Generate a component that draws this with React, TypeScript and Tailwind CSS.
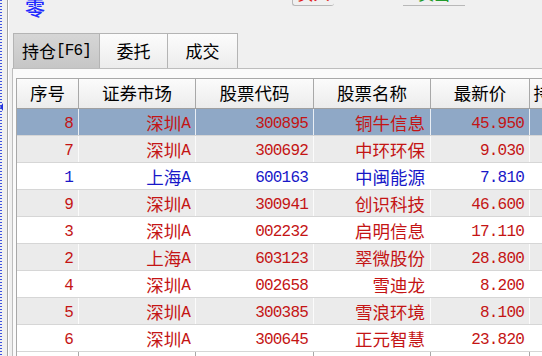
const cjk = "font-['Noto_Sans_CJK_SC',sans-serif]";
const mono = "font-['Liberation_Mono',monospace] text-[16px] tracking-[-0.8px]";

type Row = { no: string; mkt: string; code: string; name: string; price: string; color: "red" | "blue" };

const rows: Row[] = [
  { no: "8", mkt: "深圳", code: "300895", name: "铜牛信息", price: "45.950", color: "red" },
  { no: "7", mkt: "深圳", code: "300692", name: "中环环保", price: "9.030", color: "red" },
  { no: "1", mkt: "上海", code: "600163", name: "中闽能源", price: "7.810", color: "blue" },
  { no: "9", mkt: "深圳", code: "300941", name: "创识科技", price: "46.600", color: "red" },
  { no: "3", mkt: "深圳", code: "002232", name: "启明信息", price: "17.110", color: "red" },
  { no: "2", mkt: "上海", code: "603123", name: "翠微股份", price: "28.800", color: "red" },
  { no: "4", mkt: "深圳", code: "002658", name: "雪迪龙", price: "8.200", color: "red" },
  { no: "5", mkt: "深圳", code: "300385", name: "雪浪环境", price: "8.100", color: "red" },
  { no: "6", mkt: "深圳", code: "300645", name: "正元智慧", price: "23.820", color: "red" },
];

const headers = [
  { label: "序号", w: "w-[62px]" },
  { label: "证券市场", w: "w-[117px]" },
  { label: "股票代码", w: "w-[118px]" },
  { label: "股票名称", w: "w-[117px]" },
  { label: "最新价", w: "w-[99px]" },
  { label: "持仓数量", w: "w-[78px]" },
];

function Cell({ w, children }: { w: string; children?: React.ReactNode }) {
  return (
    <div className={`${w} shrink-0 h-full flex items-center justify-end pr-[5px] pt-[3px] border-r border-white/80`}>
      {children}
    </div>
  );
}

export default function App() {
  return (
    <div className="w-[542px] h-[356px] overflow-hidden bg-[#f0f0f0] flex text-black">
      {/* splitter strip */}
      <div className="relative w-[9px] h-full flex shrink-0">
        <div className="w-[2px] h-full bg-[repeating-linear-gradient(to_bottom,#3d52e0_0px,#3d52e0_1px,transparent_1px,transparent_3px)]" />
        <div className="w-[5px] h-full" />
        <div className="w-[1px] h-full bg-[#a3a3a3]" />
        <div className="w-[1px] h-full bg-white" />
        <div className="absolute left-0 top-[103px] w-0 h-0 border-y-[4px] border-y-transparent border-r-[3px] border-r-[#2233dd]" />
      </div>

      <div className="flex-1 min-w-0 flex flex-col">
        {/* top strip */}
        <div className="h-[33px] shrink-0 flex items-start">
          <span className={`${cjk} ml-[16px] -mt-[3px] text-[20px] leading-[22px] font-medium text-[#1f2bff]`}>零</span>
          <div className={`${cjk} ml-[247px] -mt-[18px] w-[42px] h-[24px] rounded-b-[3px] border-l border-b border-[#b8b8b8] bg-[#f0f0f0] flex items-end justify-center pb-[2px] text-[16px] leading-[20px] text-[#e01818]`}>
            买入
          </div>
          <div className={`${cjk} ml-[69px] -mt-[18px] w-[62px] h-[24px] border-b border-[#b8b8b8] flex items-end justify-center pb-[2px] text-[16px] leading-[20px] text-[#1f9a2a]`}>
            卖出
          </div>
        </div>

        {/* tabs */}
        <div className="h-[35px] shrink-0 flex items-end pl-[4px]">
          <div className={`${cjk} w-[87px] h-[35px] flex items-center justify-center text-[17px] border-t border-l border-r border-[#b4b4b4] bg-linear-to-b from-[#d6d6d6] to-[#c6c6c6]`}>
            持仓<span className={mono}>[F6]</span>
          </div>
          <div className={`${cjk} w-[68px] h-[35px] flex items-center justify-center text-[17px] border-t border-r border-[#b4b4b4] bg-linear-to-b from-[#fcfcfc] to-[#ececec]`}>
            委托
          </div>
          <div className={`${cjk} w-[70px] h-[35px] flex items-center justify-center text-[17px] border-t border-r border-[#b4b4b4] bg-linear-to-b from-[#fcfcfc] to-[#ececec]`}>
            成交
          </div>
        </div>

        {/* panel */}
        <div className="flex-1 ml-[3px] border-l border-t border-[#bdbdbd] bg-[#fafafa] pl-[3px] pt-[9px] min-w-0 overflow-hidden">
          <div className="border-l border-t border-[#a8a8a8] bg-white w-[700px]">
            <div className="h-[30px] flex border-b border-[#a0a0a0] bg-linear-to-b from-[#fbfbfb] to-[#ececec]">
              {headers.map((h) => (
                <div
                  key={h.label}
                  className={`${h.w} ${cjk} shrink-0 h-full flex items-center justify-center text-[17.5px] border-r border-[#a8a8a8] whitespace-nowrap`}
                >
                  {h.label}
                </div>
              ))}
            </div>
            {rows.map((r, i) => {
              const bg = i === 0 ? "bg-[#8fa8c6]" : i % 2 === 1 ? "bg-[#ebebeb]" : "bg-white";
              const color = r.color === "blue" ? "text-[#1818c8]" : "text-[#c41414]";
              return (
                <div key={r.code} className={`h-[27px] flex border-b border-[#d6d6d6] ${bg} ${color}`}>
                  <Cell w="w-[62px]">
                    <span className={mono}>{r.no}</span>
                  </Cell>
                  <Cell w="w-[117px]">
                    <span className={`${cjk} text-[17.5px]`}>{r.mkt}</span>
                    <span className={mono}>A</span>
                  </Cell>
                  <Cell w="w-[118px]">
                    <span className={mono}>{r.code}</span>
                  </Cell>
                  <Cell w="w-[117px]">
                    <span className={`${cjk} text-[17.5px]`}>{r.name}</span>
                  </Cell>
                  <Cell w="w-[99px]">
                    <span className={mono}>{r.price}</span>
                  </Cell>
                  <Cell w="w-[78px]" />
                </div>
              );
            })}
            <div className="h-[27px] flex bg-white">
              {headers.map((h) => (
                <div key={h.label} className={`${h.w} shrink-0 h-full border-r border-[#a8a8a8]`} />
              ))}
            </div>
          </div>
        </div>
      </div>
    </div>
  );
}
